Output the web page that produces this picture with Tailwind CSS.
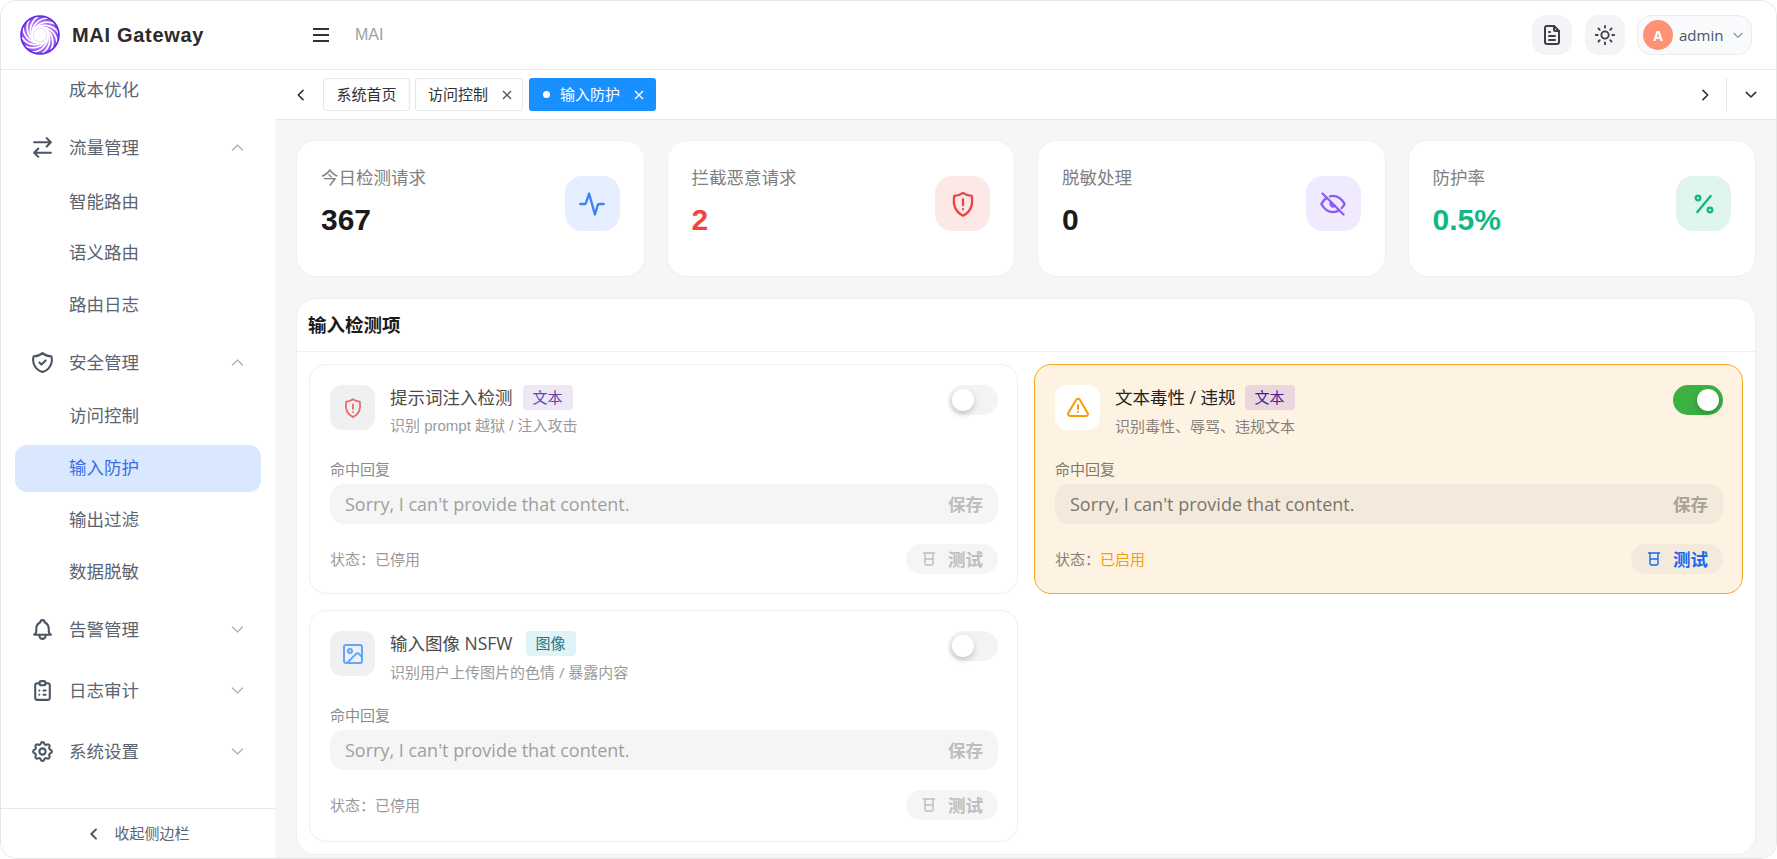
<!DOCTYPE html>
<html lang="en">
<head>
    <meta charset="UTF-8">
    <title>MAI Gateway</title>
    <script src="https://cdn.jsdelivr.net/npm/@tailwindcss/browser@4"></script>
</head>
<body class="bg-white font-['Open_Sans','Noto_Sans_CJK_SC',sans-serif]">
<div class="h-screen flex flex-col border border-[#e5e6e8] rounded-[16px] overflow-hidden bg-white">
    <!-- Header -->
    <header class="h-[69px] shrink-0 flex items-center border-b border-[#e8e9eb] bg-white">
        <div class="w-[274px] shrink-0 flex items-center pl-[19px] gap-[12px]">
            <svg width="40" height="40" viewBox="0 0 40 40">
                <defs>
                    <radialGradient id="lg"><stop offset="25%" stop-color="#f3e8ff"/><stop offset="55%" stop-color="#c084fc"/><stop offset="100%" stop-color="#8b3ff0"/></radialGradient>
                    <path id="sw" d="M14.5 14.5 C21 8.5 32 8.5 38.5 18" fill="none" stroke="#ffffff" stroke-width="1.7"/>
                </defs>
                <circle cx="20" cy="20" r="19" fill="url(#lg)"/>
                <use href="#sw"/><use href="#sw" transform="rotate(30 20 20)"/><use href="#sw" transform="rotate(60 20 20)"/><use href="#sw" transform="rotate(90 20 20)"/><use href="#sw" transform="rotate(120 20 20)"/><use href="#sw" transform="rotate(150 20 20)"/><use href="#sw" transform="rotate(180 20 20)"/><use href="#sw" transform="rotate(210 20 20)"/><use href="#sw" transform="rotate(240 20 20)"/><use href="#sw" transform="rotate(270 20 20)"/><use href="#sw" transform="rotate(300 20 20)"/><use href="#sw" transform="rotate(330 20 20)"/>
                <circle cx="20" cy="20" r="19" fill="none" stroke="#5b2ee6" stroke-width="1.6"/>
                <circle cx="20" cy="20" r="6.5" fill="#ffffff"/>
            </svg>
            <span class="font-['Liberation_Sans'] font-bold text-[20px] tracking-[0.7px] text-[#2b2b2b]">MAI Gateway</span>
        </div>
        <button class="ml-[36px] text-[#303133]">
            <svg width="20" height="20" viewBox="0 0 20 20" fill="none" stroke="currentColor" stroke-width="2"><path d="M2 4h16M2 10h16M2 16h16"/></svg>
        </button>
        <span class="ml-[24px] text-[16px] text-[#a0a0a0] font-['Liberation_Sans']">MAI</span>
        <div class="ml-auto flex items-center mr-[24px]">
            <button class="w-[40px] h-[40px] rounded-[14px] bg-[#f3f4f6] flex items-center justify-center text-[#3f3f46]">
                <svg width="24" height="24" viewBox="0 0 24 24" fill="none" stroke="currentColor" stroke-width="2" stroke-linecap="round" stroke-linejoin="round"><path d="M14 3v4a1 1 0 0 0 1 1h4"/><path d="M17 21h-10a2 2 0 0 1 -2 -2v-14a2 2 0 0 1 2 -2h7l5 5v11a2 2 0 0 1 -2 2z"/><path d="M9 9h1M9 13h6M9 17h6"/></svg>
            </button>
            <button class="ml-[13px] w-[40px] h-[40px] rounded-[14px] bg-[#f3f4f6] flex items-center justify-center text-[#3f3f46]">
                <svg width="22" height="22" viewBox="0 0 24 24" fill="none" stroke="currentColor" stroke-width="2" stroke-linecap="round"><circle cx="12" cy="12" r="4"/><path d="M12 2v2M12 20v2M4.9 4.9l1.4 1.4M17.7 17.7l1.4 1.4M2 12h2M20 12h2M6.3 17.7l-1.4 1.4M19.1 4.9l-1.4 1.4"/></svg>
            </button>
            <div class="ml-[12px] w-[115px] h-[40px] rounded-[14px] bg-[#f8fafc] border border-[#e8ebf0] flex items-center pl-[5px]">
                <span class="w-[30px] h-[30px] rounded-full bg-[#ff9175] text-white text-[14px] font-bold flex items-center justify-center">A</span>
                <span class="ml-[6px] text-[15px] text-[#475569]">admin</span>
                <svg class="ml-[8px] text-[#8a8f99]" width="14" height="14" viewBox="0 0 24 24" fill="none" stroke="currentColor" stroke-width="2" stroke-linecap="round" stroke-linejoin="round"><path d="M5 9l7 7 7-7"/></svg>
            </div>
        </div>
    </header>

    <div class="flex-1 flex min-h-0">
        <!-- Sidebar -->
        <aside class="w-[274px] shrink-0 flex flex-col bg-white">
            <nav class="h-[738px] overflow-hidden px-[14px] text-[17.5px] text-[#5b6472]">
                <div class="-mt-[4px] h-[47px] flex items-center pl-[54px]">成本优化</div>

                <div class="mt-[11px] h-[47px] flex items-center pl-[15px]">
                    <svg class="w-[25px] h-[25px] mr-[14px] text-[#4b5563]" viewBox="0 0 24 24" fill="none" stroke="currentColor" stroke-width="2" stroke-linecap="round" stroke-linejoin="round"><path d="M16 3l4 4-4 4M20 7H4M8 21l-4-4 4-4M4 17h16"/></svg>
                    <span>流量管理</span>
                    <svg class="ml-auto mr-[16px] text-[#a9afbb]" width="15" height="15" viewBox="0 0 24 24" fill="none" stroke="currentColor" stroke-width="2" stroke-linecap="round" stroke-linejoin="round"><path d="M4 16l8-8 8 8"/></svg>
                </div>
                <div class="mt-[7px] flex flex-col gap-[5px]">
                    <div class="h-[46.5px] flex items-center pl-[54px]">智能路由</div>
                    <div class="h-[46px] flex items-center pl-[54px]">语义路由</div>
                    <div class="h-[46.5px] flex items-center pl-[54px]">路由日志</div>
                </div>

                <div class="mt-[12px] h-[47px] flex items-center pl-[15px]">
                    <svg class="w-[25px] h-[25px] mr-[14px] text-[#4b5563]" viewBox="0 0 24 24" fill="none" stroke="currentColor" stroke-width="2" stroke-linecap="round" stroke-linejoin="round"><path d="M12 3a12 12 0 0 0 8.5 3a12 12 0 0 1 -8.5 15a12 12 0 0 1 -8.5 -15a12 12 0 0 0 8.5 -3"/><path d="M9 12l2 2l4 -4"/></svg>
                    <span>安全管理</span>
                    <svg class="ml-auto mr-[16px] text-[#a9afbb]" width="15" height="15" viewBox="0 0 24 24" fill="none" stroke="currentColor" stroke-width="2" stroke-linecap="round" stroke-linejoin="round"><path d="M4 16l8-8 8 8"/></svg>
                </div>
                <div class="mt-[6px] flex flex-col gap-[5px]">
                    <div class="h-[46.5px] flex items-center pl-[54px]">访问控制</div>
                    <div class="mt-[1px] h-[47.5px] pb-[2px] flex items-center pl-[54px] rounded-[12px] bg-[#d9e8ff] text-[#3b6ee8]">输入防护</div>
                    <div class="-mt-[1px] h-[46.5px] flex items-center pl-[54px]">输出过滤</div>
                    <div class="h-[46.5px] flex items-center pl-[54px]">数据脱敏</div>
                </div>

                <div class="mt-[12px] h-[47px] flex items-center pl-[15px]">
                    <svg class="w-[25px] h-[25px] mr-[14px] text-[#4b5563]" viewBox="0 0 24 24" fill="none" stroke="currentColor" stroke-width="2" stroke-linecap="round" stroke-linejoin="round"><path d="M10 5a2 2 0 1 1 4 0a7 7 0 0 1 4 6v3a4 4 0 0 0 2 3h-16a4 4 0 0 0 2 -3v-3a7 7 0 0 1 4 -6"/><path d="M9 17v1a3 3 0 0 0 6 0v-1"/></svg>
                    <span>告警管理</span>
                    <svg class="ml-auto mr-[16px] text-[#a9afbb]" width="15" height="15" viewBox="0 0 24 24" fill="none" stroke="currentColor" stroke-width="2" stroke-linecap="round" stroke-linejoin="round"><path d="M4 8l8 8 8-8"/></svg>
                </div>
                <div class="mt-[14px] h-[47px] flex items-center pl-[15px]">
                    <svg class="w-[25px] h-[25px] mr-[14px] text-[#4b5563]" viewBox="0 0 24 24" fill="none" stroke="currentColor" stroke-width="2" stroke-linecap="round" stroke-linejoin="round"><path d="M9 5h-2a2 2 0 0 0 -2 2v12a2 2 0 0 0 2 2h10a2 2 0 0 0 2 -2v-12a2 2 0 0 0 -2 -2h-2"/><rect x="9" y="3" width="6" height="4" rx="2"/><path d="M9 12h.01M13 12h2M9 16h.01M13 16h2"/></svg>
                    <span>日志审计</span>
                    <svg class="ml-auto mr-[16px] text-[#a9afbb]" width="15" height="15" viewBox="0 0 24 24" fill="none" stroke="currentColor" stroke-width="2" stroke-linecap="round" stroke-linejoin="round"><path d="M4 8l8 8 8-8"/></svg>
                </div>
                <div class="mt-[14px] h-[47px] flex items-center pl-[15px]">
                    <svg class="w-[25px] h-[25px] mr-[14px] text-[#4b5563]" viewBox="0 0 24 24" fill="none" stroke="currentColor" stroke-width="2" stroke-linecap="round" stroke-linejoin="round"><path d="M10.325 4.317c.426 -1.756 2.924 -1.756 3.35 0a1.724 1.724 0 0 0 2.573 1.066c1.543 -.94 3.31 .826 2.37 2.37a1.724 1.724 0 0 0 1.065 2.572c1.756 .426 1.756 2.924 0 3.35a1.724 1.724 0 0 0 -1.066 2.573c.94 1.543 -.826 3.31 -2.37 2.37a1.724 1.724 0 0 0 -2.572 1.065c-.426 1.756 -2.924 1.756 -3.35 0a1.724 1.724 0 0 0 -2.573 -1.066c-1.543 .94 -3.31 -.826 -2.37 -2.37a1.724 1.724 0 0 0 -1.065 -2.572c-1.756 -.426 -1.756 -2.924 0 -3.35a1.724 1.724 0 0 0 1.066 -2.573c-.94 -1.543 .826 -3.31 2.37 -2.37c1 .608 2.296 .07 2.572 -1.065z"/><circle cx="12" cy="12" r="3"/></svg>
                    <span>系统设置</span>
                    <svg class="ml-auto mr-[16px] text-[#a9afbb]" width="15" height="15" viewBox="0 0 24 24" fill="none" stroke="currentColor" stroke-width="2" stroke-linecap="round" stroke-linejoin="round"><path d="M4 8l8 8 8-8"/></svg>
                </div>
            </nav>
            <div class="flex-1 border-t border-[#e8e9eb] flex items-center justify-center text-[15px] text-[#5b6472]">
                <svg class="mr-[12px] text-[#4b5563]" width="16" height="16" viewBox="0 0 24 24" fill="none" stroke="currentColor" stroke-width="3" stroke-linecap="round" stroke-linejoin="round"><path d="M15 5l-7 7 7 7"/></svg>
                收起侧边栏
            </div>
        </aside>

        <div class="flex-1 min-w-0 flex flex-col bg-[#f5f6f8]">
            <!-- Tabs -->
            <div class="h-[50px] shrink-0 bg-white border-b border-[#e8e9eb] flex items-center text-[15px] text-[#303133]">
                <svg class="ml-[18px] mr-[14px]" width="16" height="16" viewBox="0 0 24 24" fill="none" stroke="currentColor" stroke-width="2.4" stroke-linecap="round" stroke-linejoin="round"><path d="M15 5l-7 7 7 7"/></svg>
                <div class="h-[33px] w-[87px] border border-[#e5e6e8] rounded-[3px] flex items-center justify-center">系统首页</div>
                <div class="ml-[5px] h-[33px] w-[108px] border border-[#e5e6e8] rounded-[3px] flex items-center pl-[12px]">访问控制
                    <svg class="ml-[13px] text-[#4b5563]" width="12" height="12" viewBox="0 0 12 12" fill="none" stroke="currentColor" stroke-width="1.3"><path d="M2 2l8 8M10 2l-8 8"/></svg>
                </div>
                <div class="ml-[6px] h-[33px] w-[127px] rounded-[3px] bg-[#1890ff] text-white flex items-center pl-[14px]">
                    <span class="w-[7px] h-[7px] rounded-full bg-white mr-[10px]"></span>输入防护
                    <svg class="ml-[13px]" width="12" height="12" viewBox="0 0 12 12" fill="none" stroke="currentColor" stroke-width="1.3"><path d="M2 2l8 8M10 2l-8 8"/></svg>
                </div>
                <svg class="ml-auto" width="16" height="16" viewBox="0 0 24 24" fill="none" stroke="currentColor" stroke-width="2.4" stroke-linecap="round" stroke-linejoin="round"><path d="M9 5l7 7-7 7"/></svg>
                <span class="ml-[13px] w-px h-[33px] bg-[#e5e6e8]"></span>
                <svg class="ml-[16px] mr-[17px]" width="16" height="16" viewBox="0 0 24 24" fill="none" stroke="currentColor" stroke-width="2.4" stroke-linecap="round" stroke-linejoin="round"><path d="M5 8l7 7 7-7"/></svg>
            </div>

            <main class="flex-1 min-h-0 overflow-hidden pt-[20px] pl-[21px] pr-[20px]">
                <!-- Stats -->
                <div class="grid grid-cols-4 gap-[22px]">
                    <div class="h-[137px] bg-white border border-[#eeeff1] rounded-[20px] pl-[24px] pr-[24px] pt-[23px] flex justify-between">
                        <div><div class="text-[17.5px] leading-[26px] text-[#808080]">今日检测请求</div><div class="mt-[12px] font-['Liberation_Sans'] font-bold text-[30px] leading-[36px] text-[#1a1a1a]">367</div></div>
                        <div class="mt-[12px] w-[55px] h-[55px] rounded-[17px] bg-[#e5efff] flex items-center justify-center text-[#3b82f6]">
                            <svg width="28" height="30" viewBox="0 0 24 24" fill="none" stroke="currentColor" stroke-width="2" stroke-linecap="round" stroke-linejoin="round"><path d="M2 12h3.5c1 0 1.3-.6 1.6-1.6L9.5 3l5 18 2.3-7.6c.3-1 .7-1.4 1.7-1.4H22"/></svg>
                        </div>
                    </div>
                    <div class="h-[137px] bg-white border border-[#eeeff1] rounded-[20px] pl-[24px] pr-[24px] pt-[23px] flex justify-between">
                        <div><div class="text-[17.5px] leading-[26px] text-[#808080]">拦截恶意请求</div><div class="mt-[12px] font-['Liberation_Sans'] font-bold text-[30px] leading-[36px] text-[#ef4444]">2</div></div>
                        <div class="mt-[12px] w-[55px] h-[55px] rounded-[17px] bg-[#fde8e8] flex items-center justify-center text-[#ef4444]">
                            <svg width="28" height="28" viewBox="0 0 24 24" fill="none" stroke="currentColor" stroke-width="2" stroke-linecap="round" stroke-linejoin="round"><path d="M12 2.5a12 12 0 0 0 7.5 2.5c.8 5 .5 13 -7.5 17c-8 -4 -8.3 -12 -7.5 -17a12 12 0 0 0 7.5 -2.5"/><path d="M12 8v5M12 16.5h.01"/></svg>
                        </div>
                    </div>
                    <div class="h-[137px] bg-white border border-[#eeeff1] rounded-[20px] pl-[24px] pr-[24px] pt-[23px] flex justify-between">
                        <div><div class="text-[17.5px] leading-[26px] text-[#808080]">脱敏处理</div><div class="mt-[12px] font-['Liberation_Sans'] font-bold text-[30px] leading-[36px] text-[#1a1a1a]">0</div></div>
                        <div class="mt-[12px] w-[55px] h-[55px] rounded-[17px] bg-[#f0eaff] flex items-center justify-center text-[#8b5cf6]">
                            <svg width="28" height="28" viewBox="0 0 24 24" fill="none" stroke="currentColor" stroke-width="2" stroke-linecap="round" stroke-linejoin="round"><path d="M3 3l18 18"/><path d="M10.584 10.587a2 2 0 0 0 2.828 2.83"/><path d="M9.363 5.365a9.466 9.466 0 0 1 2.637 -.365c4 0 7.333 2.333 10 7c-.778 1.361 -1.612 2.524 -2.503 3.488m-2.14 1.861c-1.631 1.1 -3.415 1.651 -5.357 1.651c-4 0 -7.333 -2.333 -10 -7c1.369 -2.395 2.913 -4.175 4.632 -5.341"/></svg>
                        </div>
                    </div>
                    <div class="h-[137px] bg-white border border-[#eeeff1] rounded-[20px] pl-[24px] pr-[24px] pt-[23px] flex justify-between">
                        <div><div class="text-[17.5px] leading-[26px] text-[#808080]">防护率</div><div class="mt-[12px] font-['Liberation_Sans'] font-bold text-[30px] leading-[36px] text-[#10b981]">0.5%</div></div>
                        <div class="mt-[12px] w-[55px] h-[55px] rounded-[17px] bg-[#e0f5ec] flex items-center justify-center text-[#10b981]">
                            <svg width="32" height="32" viewBox="0 0 24 24" fill="none" stroke="currentColor" stroke-width="1.8" stroke-linecap="round" stroke-linejoin="round"><circle cx="16.5" cy="16.5" r="1.7"/><circle cx="7.5" cy="7.5" r="1.7"/><path d="M7 18L17 6"/></svg>
                        </div>
                    </div>
                </div>

                <!-- Input checks -->
                <section class="mt-[21px] bg-white border border-[#eeeff1] rounded-[20px]">
                    <div class="h-[53px] border-b border-[#eeeff1] flex items-center pl-[11px] text-[18.5px] font-bold text-[#1a1a1a]">输入检测项</div>
                    <div class="grid grid-cols-2 gap-[16px] p-[12px]">
                        <!-- Prompt injection -->
                        <div class="h-[230px] border border-[#eeeff1] rounded-[17px] pl-[20px] pr-[19px] pt-[20px]">
                            <div class="flex">
                                <div class="w-[45px] h-[45px] rounded-[12px] bg-[#eff0f1] flex items-center justify-center text-[#f06a6a]">
                                    <svg width="22" height="22" viewBox="0 0 24 24" fill="none" stroke="currentColor" stroke-width="2" stroke-linecap="round" stroke-linejoin="round"><path d="M12 2.5a12 12 0 0 0 7.5 2.5c.8 5 .5 13 -7.5 17c-8 -4 -8.3 -12 -7.5 -17a12 12 0 0 0 7.5 -2.5"/><path d="M12 8v5M12 16.5h.01"/></svg>
                                </div>
                                <div class="ml-[15px]">
                                    <div class="flex items-center h-[25px] text-[17.5px] text-[#4a4a4a]">提示词注入检测<span class="ml-[10px] w-[50px] h-[25px] rounded-[4px] bg-[#ede7f6] text-[#5e48ad] text-[15px] flex items-center justify-center">文本</span></div>
                                    <div class="mt-[4px] text-[15px] leading-[24px] text-[#9a9a9a] font-['Liberation_Sans','Noto_Sans_CJK_SC',sans-serif]">识别 prompt 越狱 / 注入攻击</div>
                                </div>
                                <div class="ml-auto w-[50px] h-[30px] rounded-full bg-[#f3f3f3] flex items-center pl-[4px]"><span class="w-[22px] h-[22px] rounded-full bg-white shadow-[0_3px_6px_rgba(0,0,0,0.2)]"></span></div>
                            </div>
                            <div class="mt-[19px] text-[15px] leading-[24px] text-[#8c8c8c]">命中回复</div>
                            <div class="mt-[3px] h-[40px] rounded-[14px] bg-[#f5f5f5] flex items-center justify-between px-[15px] text-[18px] text-[#a0a0a0]">Sorry, I can't provide that content.<span class="font-bold text-[17.5px] text-[#bdbdbd]">保存</span></div>
                            <div class="mt-[20px] flex items-center justify-between">
                                <div class="text-[15px] text-[#9a9a9a]">状态：已停用</div>
                                <div class="w-[92px] h-[30px] rounded-full bg-[#f5f5f5] flex items-center justify-end pr-[15px] text-[17.5px] font-bold text-[#bdbdbd]">
                                    <svg class="mr-[11px]" width="16" height="16" viewBox="0 0 16 16" fill="none" stroke="currentColor" stroke-width="1.4" stroke-linecap="round" stroke-linejoin="round"><path d="M2.5 2h11M4 2v10.5a1.5 1.5 0 0 0 1.5 1.5h5a1.5 1.5 0 0 0 1.5-1.5V2M4 8h8"/></svg>测试
                                </div>
                            </div>
                        </div>
                        <!-- Toxicity (enabled) -->
                        <div class="h-[230px] border border-[#f5a623] rounded-[17px] bg-[#fef3e2] pl-[20px] pr-[19px] pt-[20px]">
                            <div class="flex">
                                <div class="w-[45px] h-[45px] rounded-[12px] bg-white flex items-center justify-center text-[#f59e0b]">
                                    <svg width="24" height="24" viewBox="0 0 24 24" fill="none" stroke="currentColor" stroke-width="2" stroke-linecap="round" stroke-linejoin="round"><path d="M12 9v4"/><path d="M10.363 3.591l-8.106 13.534a1.914 1.914 0 0 0 1.636 2.871h16.214a1.914 1.914 0 0 0 1.636 -2.87l-8.106 -13.536a1.914 1.914 0 0 0 -3.274 0z"/><path d="M12 16h.01"/></svg>
                                </div>
                                <div class="ml-[15px]">
                                    <div class="flex items-center h-[25px] text-[17.5px] text-[#222222]">文本毒性 / 违规<span class="ml-[9px] w-[50px] h-[25px] rounded-[4px] bg-[#e8d8de] text-[#4a1d96] text-[15px] flex items-center justify-center">文本</span></div>
                                    <div class="mt-[4px] text-[15px] leading-[24px] text-[#85807a]">识别毒性、辱骂、违规文本</div>
                                </div>
                                <div class="ml-auto w-[50px] h-[30px] rounded-full bg-[#3cb043] flex items-center justify-end pr-[4px]"><span class="w-[22px] h-[22px] rounded-full bg-white shadow-[0_3px_6px_rgba(0,0,0,0.2)]"></span></div>
                            </div>
                            <div class="mt-[19px] text-[15px] leading-[24px] text-[#7d7870]">命中回复</div>
                            <div class="mt-[3px] h-[40px] rounded-[14px] bg-[#f3eadb] flex items-center justify-between px-[15px] text-[18px] text-[#7a756d]">Sorry, I can't provide that content.<span class="font-bold text-[17.5px] text-[#a8a298]">保存</span></div>
                            <div class="mt-[20px] flex items-center justify-between">
                                <div class="text-[15px] text-[#85807a]">状态：<span class="text-[#f59e0b]">已启用</span></div>
                                <div class="w-[92px] h-[30px] rounded-full bg-[#f3eadb] flex items-center justify-end pr-[15px] text-[17.5px] font-bold text-[#1668f0]">
                                    <svg class="mr-[11px]" width="16" height="16" viewBox="0 0 16 16" fill="none" stroke="currentColor" stroke-width="1.4" stroke-linecap="round" stroke-linejoin="round"><path d="M2.5 2h11M4 2v10.5a1.5 1.5 0 0 0 1.5 1.5h5a1.5 1.5 0 0 0 1.5-1.5V2M4 8h8"/></svg>测试
                                </div>
                            </div>
                        </div>
                        <!-- Input image NSFW -->
                        <div class="h-[232px] border border-[#eeeff1] rounded-[17px] pl-[20px] pr-[19px] pt-[20px]">
                            <div class="flex">
                                <div class="w-[45px] h-[45px] rounded-[12px] bg-[#eff0f1] flex items-center justify-center text-[#60a5fa]">
                                    <svg width="24" height="24" viewBox="0 0 24 24" fill="none" stroke="currentColor" stroke-width="2" stroke-linecap="round" stroke-linejoin="round"><rect x="3" y="3" width="18" height="18" rx="2"/><circle cx="9" cy="9" r="2"/><path d="M21 15l-3.086-3.086a2 2 0 0 0-2.828 0L6 21"/></svg>
                                </div>
                                <div class="ml-[15px]">
                                    <div class="flex items-center h-[25px] text-[17.5px] text-[#4a4a4a]">输入图像 NSFW<span class="ml-[13px] w-[50px] h-[25px] rounded-[4px] bg-[#e0f3f7] text-[#2b7480] text-[15px] flex items-center justify-center">图像</span></div>
                                    <div class="mt-[4px] text-[15px] leading-[24px] text-[#9a9a9a]">识别用户上传图片的色情 / 暴露内容</div>
                                </div>
                                <div class="ml-auto w-[50px] h-[30px] rounded-full bg-[#f3f3f3] flex items-center pl-[4px]"><span class="w-[22px] h-[22px] rounded-full bg-white shadow-[0_3px_6px_rgba(0,0,0,0.2)]"></span></div>
                            </div>
                            <div class="mt-[19px] text-[15px] leading-[24px] text-[#8c8c8c]">命中回复</div>
                            <div class="mt-[3px] h-[40px] rounded-[14px] bg-[#f5f5f5] flex items-center justify-between px-[15px] text-[18px] text-[#a0a0a0]">Sorry, I can't provide that content.<span class="font-bold text-[17.5px] text-[#bdbdbd]">保存</span></div>
                            <div class="mt-[20px] flex items-center justify-between">
                                <div class="text-[15px] text-[#9a9a9a]">状态：已停用</div>
                                <div class="w-[92px] h-[30px] rounded-full bg-[#f5f5f5] flex items-center justify-end pr-[15px] text-[17.5px] font-bold text-[#bdbdbd]">
                                    <svg class="mr-[11px]" width="16" height="16" viewBox="0 0 16 16" fill="none" stroke="currentColor" stroke-width="1.4" stroke-linecap="round" stroke-linejoin="round"><path d="M2.5 2h11M4 2v10.5a1.5 1.5 0 0 0 1.5 1.5h5a1.5 1.5 0 0 0 1.5-1.5V2M4 8h8"/></svg>测试
                                </div>
                            </div>
                        </div>
                    </div>
                </section>
            </main>
        </div>
    </div>
</div>
</body>
</html>
